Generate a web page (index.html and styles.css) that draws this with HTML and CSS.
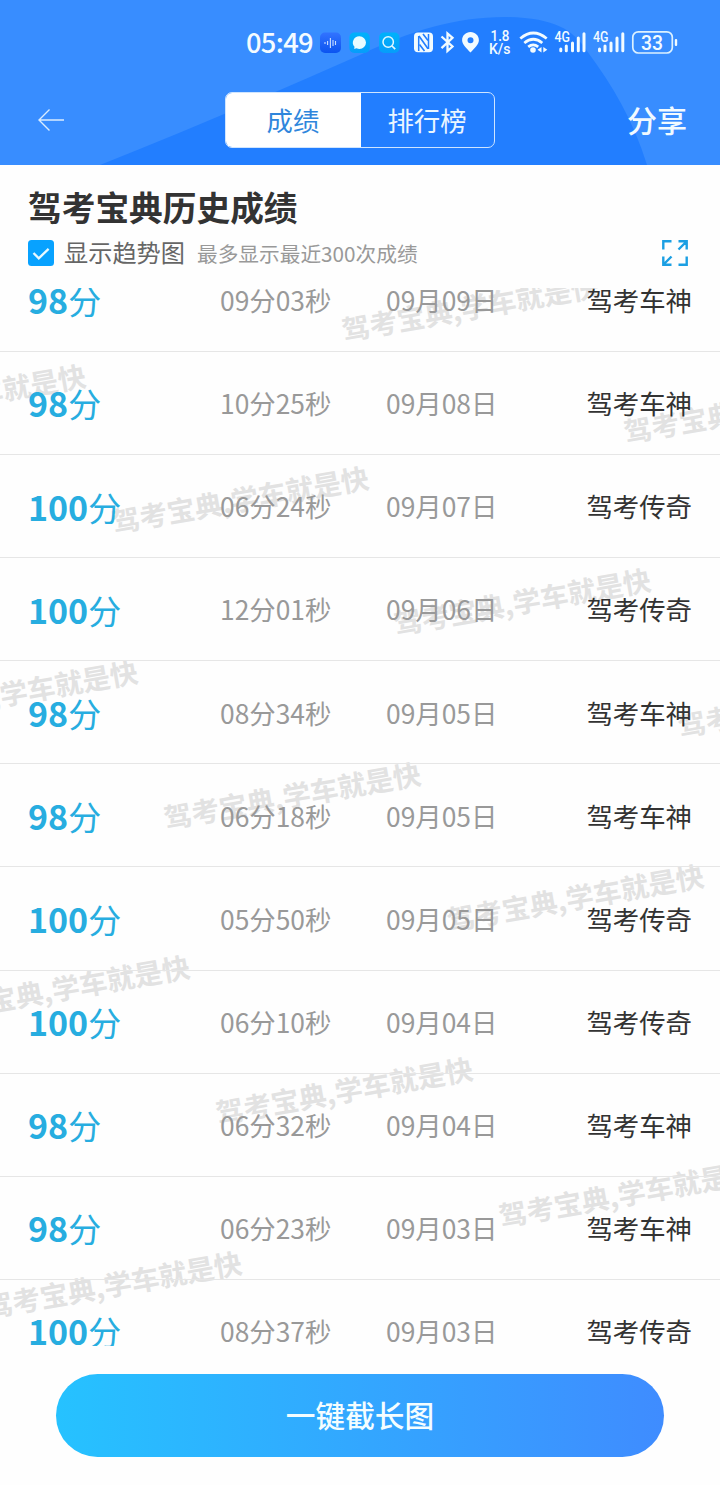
FILE: index.html
```html
<!DOCTYPE html>
<html lang="zh-CN">
<head>
<meta charset="utf-8">
<title>驾考宝典历史成绩</title>
<link rel="stylesheet" href="styles.css">
</head>
<body>
<header class="header">
  <svg class="header-bg" width="720" height="165" viewBox="0 0 720 165" aria-hidden="true">
    <path fill="#227eff" d="M100 165 C190 129 275 93 360 55 C410 31 455 17 505 17 C555 18 572 29 587 51 C613 86 634 122 647 165Z"/>
  </svg>
  <div class="status">
    <span class="clock">05:49</span>
    <svg class="status-icons" width="440" height="40" viewBox="280 22 440 40" aria-hidden="true">
      <defs>
        <linearGradient id="va" x2="0" y2="1"><stop stop-color="#3273ff"/><stop offset="1" stop-color="#0b54f0"/></linearGradient>
        <linearGradient id="ch" x2="0" y2="1"><stop stop-color="#00b2fb"/><stop offset="1" stop-color="#069dfa"/></linearGradient>
      </defs>
      <rect x="320" y="32.500" width="21" height="20.500" rx="5" fill="url(#va)"/>
      <path d="M325 42v2M327.600 41v4M330.400 38v10M333 40v6M335.500 41v4" stroke="#c8ddff" stroke-width="1.100"/>
      <rect x="349.300" y="32.500" width="20.500" height="20.500" rx="5" fill="url(#ch)"/>
      <path d="M359.500 36.300a6.500 6.300 0 1 1 0 12.600c-1 0-2-.2-3-.6l-2.300.8.3-2.300a6.400 6.300 0 0 1 5-10.500z" fill="#e8fcff"/>
      <rect x="379" y="32.500" width="20.500" height="20.500" rx="5" fill="url(#ch)"/>
      <circle cx="388.200" cy="42" r="5.200" fill="none" stroke="#e2f8ff" stroke-width="1.500"/>
      <path d="M392 46l3.200 3.200" stroke="#e2f8ff" stroke-width="1.700"/>
      <rect x="414" y="32.500" width="19" height="19.800" rx="4" fill="#f2fbff"/>
      <path d="M418.700 51V36M428.500 34V49" fill="none" stroke="#227eff" stroke-width="1.500"/>
      <path d="M419 36L428 48.800M423 34l5 6.500M419.500 44.500l5 6.500" stroke="#227eff" stroke-width="1.600"/>
      <path d="M441.500 36.500l11 10-5 4.500V33.500l5 4.300-11 10.400" fill="none" stroke="#f2fbff" stroke-width="2.300"/>
      <path fill="#f2fbff" fill-rule="evenodd" d="M470.500 32c4.800 0 8.400 3.600 8.400 8.300 0 4.300-4.200 7.700-8.400 12.300-4.200-4.600-8.400-8-8.400-12.300 0-4.700 3.600-8.300 8.400-8.300zm0 5.200a3 3 0 1 0 0 6 3 3 0 0 0 0-6z"/>
      <g class="status-text" fill="#f2fbff">
        <text x="490.500" y="41" font-size="14" textLength="19" lengthAdjust="spacingAndGlyphs">1.8</text>
        <text x="489" y="54" font-size="14.500" textLength="21.500" lengthAdjust="spacingAndGlyphs">K/s</text>
        <text x="554.500" y="42.300" font-size="14" textLength="15.500" lengthAdjust="spacingAndGlyphs">4G</text>
        <text x="593" y="42.300" font-size="14" textLength="15.500" lengthAdjust="spacingAndGlyphs">4G</text>
      </g>
      <g fill="none" stroke="#f2fbff" stroke-width="2.700">
        <path d="M520.300 38.500q13-11 26.400 0M524.300 43q9-7.500 18 0M528.200 46.900q5-4 10 0"/>
      </g>
      <circle cx="533" cy="50" r="2.800" fill="#f2fbff"/>
      <path d="M541.500 47v5.500l-4-2.700zM543.300 47v5.500l4-2.700z" fill="#f2fbff"/>
      <g stroke="#f2fbff" stroke-width="3" stroke-linecap="round">
        <path d="M560.800 49v1.800M566.300 46v4.800M572.500 43v7.800M578.300 38v12.800M584 33.800v17"/>
        <path d="M599.500 49v1.800M605 46v4.800M611 43v7.800M617 38v12.800M622.800 33.800v17"/>
      </g>
      <rect x="632.800" y="31.800" width="39.500" height="21.200" rx="5.500" fill="none" stroke="#dcf1ff" stroke-width="1.700"/>
      <rect x="674.800" y="39" width="2.400" height="7" rx="1" fill="#f2fbff"/>
      <text class="status-text" x="641" y="49.500" font-size="20" textLength="22" lengthAdjust="spacingAndGlyphs" fill="#f2fbff">33</text>
    </svg>
  </div>
  <nav class="nav">
    <svg class="back" width="28" height="24" viewBox="0 0 28 24" aria-label="返回">
      <path d="M27 12H2M12.500 1.500L2 12l10.500 10.500" fill="none" stroke="#d9ecff" stroke-width="1.400"/>
    </svg>
    <div class="tabs">
      <span class="tab tab-on">成绩</span>
      <span class="tab">排行榜</span>
    </div>
    <span class="share">分享</span>
  </nav>
</header>

<section class="intro">
  <h1 class="title">驾考宝典历史成绩</h1>
  <div class="options">
    <svg class="check" width="26" height="26" viewBox="0 0 26 26" aria-hidden="true">
      <rect width="26" height="26" rx="3.500" fill="#08a2ff"/>
      <path d="M5.500 13l5.300 5.300L20.600 8.800" fill="none" stroke="#e9f9ff" stroke-width="2.300"/>
    </svg>
    <span class="trend">显示趋势图</span>
    <span class="hint">最多显示最近300次成绩</span>
    <svg class="expand" width="26" height="26" viewBox="0 0 26 26" fill="none" stroke="#1b9fe3" stroke-width="2.400" aria-hidden="true">
      <path d="M1.300 9.500V1.300H9.500M16.500 1.300h8.200V9.500M24.500 1.500L16.500 9.500M1.300 16.500v8.200H9.500M1.500 24.500l8-8M24.700 16.500v8.200H16.500"/>
    </svg>
  </div>
</section>

<main class="list">
  <svg class="watermark" width="720" height="1058" viewBox="0 288 720 1058" aria-hidden="true">
    <text transform="translate(344 341) rotate(-10)">驾考宝典,学车就是快</text>
    <text transform="translate(-169 431) rotate(-10)">驾考宝典,学车就是快</text>
    <text transform="translate(626 443) rotate(-10)">驾考宝典,学车就是快</text>
    <text transform="translate(114 533) rotate(-10)">驾考宝典,学车就是快</text>
    <text transform="translate(396 635) rotate(-10)">驾考宝典,学车就是快</text>
    <text transform="translate(-117 727) rotate(-10)">驾考宝典,学车就是快</text>
    <text transform="translate(680 737) rotate(-10)">驾考宝典,学车就是快</text>
    <text transform="translate(166 829) rotate(-10)">驾考宝典,学车就是快</text>
    <text transform="translate(449 931) rotate(-10)">驾考宝典,学车就是快</text>
    <text transform="translate(-65 1022) rotate(-10)">驾考宝典,学车就是快</text>
    <text transform="translate(218 1124) rotate(-10)">驾考宝典,学车就是快</text>
    <text transform="translate(501 1227) rotate(-10)">驾考宝典,学车就是快</text>
    <text transform="translate(-13 1318) rotate(-10)">驾考宝典,学车就是快</text>
  </svg>
  <div class="rows">
    <div class="row"><span class="score"><b>98</b>分</span><span class="time">09分03秒</span><span class="date">09月09日</span><span class="rank">驾考车神</span></div>
    <div class="row"><span class="score"><b>98</b>分</span><span class="time">10分25秒</span><span class="date">09月08日</span><span class="rank">驾考车神</span></div>
    <div class="row"><span class="score"><b>100</b>分</span><span class="time">06分24秒</span><span class="date">09月07日</span><span class="rank">驾考传奇</span></div>
    <div class="row"><span class="score"><b>100</b>分</span><span class="time">12分01秒</span><span class="date">09月06日</span><span class="rank">驾考传奇</span></div>
    <div class="row"><span class="score"><b>98</b>分</span><span class="time">08分34秒</span><span class="date">09月05日</span><span class="rank">驾考车神</span></div>
    <div class="row"><span class="score"><b>98</b>分</span><span class="time">06分18秒</span><span class="date">09月05日</span><span class="rank">驾考车神</span></div>
    <div class="row"><span class="score"><b>100</b>分</span><span class="time">05分50秒</span><span class="date">09月05日</span><span class="rank">驾考传奇</span></div>
    <div class="row"><span class="score"><b>100</b>分</span><span class="time">06分10秒</span><span class="date">09月04日</span><span class="rank">驾考传奇</span></div>
    <div class="row"><span class="score"><b>98</b>分</span><span class="time">06分32秒</span><span class="date">09月04日</span><span class="rank">驾考车神</span></div>
    <div class="row"><span class="score"><b>98</b>分</span><span class="time">06分23秒</span><span class="date">09月03日</span><span class="rank">驾考车神</span></div>
    <div class="row"><span class="score"><b>100</b>分</span><span class="time">08分37秒</span><span class="date">09月03日</span><span class="rank">驾考传奇</span></div>
  </div>
</main>

<footer class="footer"><div class="capture">一键截长图</div></footer>
</body>
</html>
```
FILE: styles.css
```css
* { box-sizing: border-box; }
body {
  margin: 0;
  width: 720px;
  height: 1485px;
  overflow: hidden;
  background: #fefefe;
  color: #333;
  font-family: "Noto Sans CJK SC", "Noto Sans", sans-serif;
  line-height: 1;
  white-space: nowrap;
  display: flex;
  flex-direction: column;
}
.header { position: relative; height: 165px; flex: none; background: #388dff; }
.header-bg { position: absolute; left: 0; top: 0; }
.status { position: relative; height: 84px; padding: 22px 0 0 246px; display: flex; }
.clock { width: 34px; font-size: 27.3px; font-weight: 500; line-height: 40px; letter-spacing: -0.7px; margin-top: -1px; color: #f4fbff; }
.status-icons { flex: none; }
.status-text { font-family: Roboto, sans-serif; font-weight: 500; }
.nav { position: relative; height: 72px; padding: 0 33px 0 37px; display: flex; align-items: center; justify-content: space-between; }
.tabs { width: 270px; height: 56px; margin-left: 27px; display: flex; border: 1.5px solid #cfe5ff; border-radius: 7px; overflow: hidden; }
.tab { flex: 1; display: flex; align-items: center; justify-content: center; font-size: 26.400px; color: #eaf6ff; }
.tab-on { background: #fff; color: #2f86dc; flex: 0 0 135px; }
.share { font-size: 30px; font-weight: 500; color: #f1faff; padding-bottom: 2px; }
.intro { height: 123px; flex: none; padding: 24px 32px 0 28px; }
.title { margin: 0; font-size: 33.700px; line-height: 36px; font-weight: 700; }
.options { display: flex; align-items: center; height: 26px; margin-top: 15px; }
.trend { margin-left: 10px; font-size: 24.200px; color: #666; padding-bottom: 2px; }
.hint { margin-left: 12px; font-size: 20.700px; color: #999; }
.expand { margin-left: auto; }
.list { position: relative; height: 1058px; flex: none; overflow: hidden; }
.watermark { position: absolute; left: 0; top: 0; }
.watermark text { font-size: 27.900px; font-weight: 700; fill: #e2e2e2; }
.rows { position: relative; margin-top: -39.200px; }
.row { height: 103.120px; padding: 1px 28px 0; display: flex; align-items: center; border-bottom: 1px solid #e6e6e6; font-size: 26.400px; }
.score { width: 192px; font-size: 33px; color: #27ade0; }
.score b { font-size: 34px; font-weight: 700; }
.time { width: 166px; color: #999; }
.date { color: #999; }
.rank { margin-left: auto; color: #333; }
.footer { padding: 28px 56px 0; }
.capture { height: 83px; padding-bottom: 2px; border-radius: 42px; background: linear-gradient(90deg, #26c2ff, #3f8cff); color: #f4fdff; font-size: 29.700px; font-weight: 500; display: flex; align-items: center; justify-content: center; }
```
